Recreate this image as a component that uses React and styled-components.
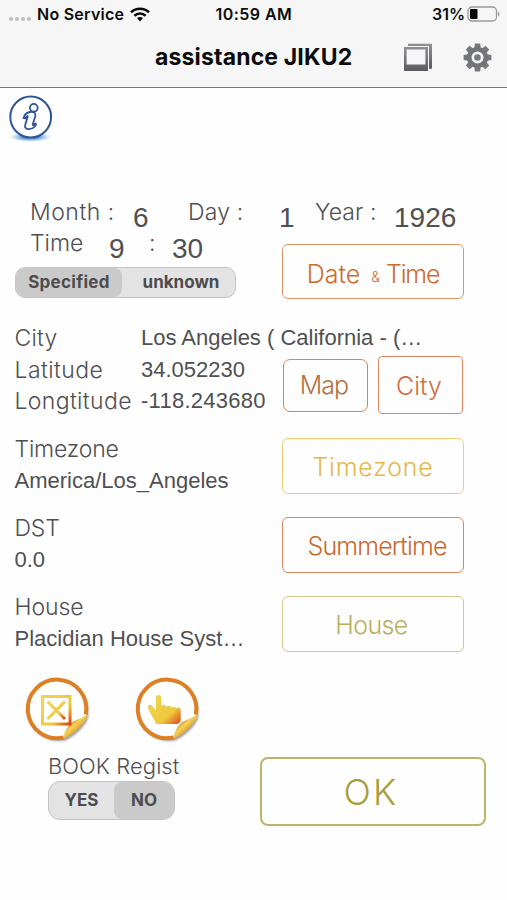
import React, { Component } from 'react';
import styled, { createGlobalStyle } from 'styled-components';

const GlobalStyle = createGlobalStyle`
  body {
    margin: 0;
    background: #fefefe;
    font-family: Inter, "Liberation Sans", sans-serif;
  }
`;

const Screen = styled.div`
  width: 507px;
  height: 900px;
  overflow: hidden;
  color: #505052;
  white-space: nowrap;
`;

/* header */
const Header = styled.header`
  box-sizing: border-box;
  height: 88px;
  background: #f6f6f6;
  border-bottom: 1px solid #77777a;
  color: #0c0c0c;
`;
const StatusBar = styled.div`
  display: grid;
  grid-template-columns: 1fr 78px 1fr;
  height: 28px;
  line-height: 28px;
  padding: 0 7px 0 9px;
  font-size: 16px;
  font-weight: 600;
`;
const StatusSide = styled.div`
  display: flex;
  align-items: center;
  justify-content: ${props => props.$end ? "flex-end" : "flex-start"};
  gap: ${props => props.$gap}px;
  letter-spacing: ${props => props.$end ? "0" : "0.25px"};
`;
const Clock = styled.div`
  letter-spacing: 0.45px;
`;
const Signal = styled.div`
  display: flex;
  gap: 2px;
  padding-top: 10px;

  i {
    width: 4px;
    height: 4px;
    border-radius: 50%;
    background: #bdbdbd;
  }
`;
const TitleBar = styled.div`
  display: grid;
  grid-template-columns: 155px 1fr 29px 29px;
  column-gap: 30px;
  align-items: center;
  height: 59px;
  padding-right: 15px;
`;
const Title = styled.h1`
  grid-column: 2;
  margin: 0 0 0 -30px;
  font-size: 23px;
  line-height: 59px;
  font-weight: 700;
  letter-spacing: 0.15px;
`;

/* form */
const Main = styled.main`
  padding: 6px 0 0;
`;
const InfoButton = styled.div`
  height: 106px;
  padding-left: 8px;
`;
const DateRow = styled.div`
  display: grid;
  grid-template-columns: ${props => props.$columns};
  height: ${props => props.$height}px;
  padding-left: ${props => props.$left}px;
`;
const Label = styled.span`
  font-size: ${props => props.$size || 23}px;
  font-weight: 320;
  line-height: ${props => props.$line || 33}px;
  letter-spacing: ${props => props.$spacing || 0}px;
`;
const BigValue = styled.span`
  font-family: "Liberation Sans", sans-serif;
  font-size: 28px;
  line-height: 35px;
`;
const Value = styled.span`
  font-family: "Liberation Sans", sans-serif;
  font-size: 22px;
  line-height: 32.5px;
  letter-spacing: ${props => props.$spacing || 0}px;
`;
const Split = styled.div`
  display: grid;
  grid-template-columns: 282px auto;
  justify-content: start;
`;
const TimeBox = styled.div`
  height: 91px;
`;
const Field = styled.div`
  display: grid;
  grid-template-columns: 126.5px auto;
  height: 31.5px;
  padding-left: 14.5px;
`;
const ButtonPair = styled.div`
  display: flex;
  align-items: center;
  gap: 10px;
  padding-left: 1px;
`;
const Entry = styled.div`
  display: grid;
  grid-template-rows: 31.5px 31.5px;
  height: 79px;
  padding-left: 14.5px;
`;

const Segmented = styled.div`
  display: grid;
  grid-template-columns: ${props => props.$columns};
  box-sizing: border-box;
  width: ${props => props.$width}px;
  height: ${props => props.$height}px;
  margin-left: ${props => props.$left}px;
  border: 1px solid #c3c3c4;
  border-radius: ${props => props.$radius}px;
  background: #e3e3e4;
  overflow: hidden;
`;
const Segment = styled.div`
  display: flex;
  align-items: center;
  justify-content: center;
  padding: 0 0 2px ${props => props.$inset || 0}px;
  font-size: 17px;
  font-weight: 700;
  letter-spacing: ${props => props.$spacing || 0}px;
  background: ${props => props.$active ? "#cacacb" : "transparent"};
  border-radius: 8px;
  color: #4c4c4e;
`;

const Button = styled.button`
  display: flex;
  align-items: center;
  justify-content: center;
  box-sizing: border-box;
  width: ${props => props.$width || 182}px;
  height: ${props => props.$height || 56}px;
  margin: ${props => props.$top || 0}px 0 0;
  padding: ${props => props.$padding || "0"};
  background: transparent;
  border: ${props => props.$border || 1.5}px solid ${props => props.$line};
  border-radius: ${props => props.$radius || 6}px;
  color: ${props => props.color};
  font-family: inherit;
  font-size: ${props => props.$size || 25}px;
  font-weight: ${props => props.$weight || 290};
  letter-spacing: ${props => props.$spacing || 0}px;

  small {
    margin: 6px 6px 0 11px;
    font-size: 14px;
    font-weight: 300;
  }
`;
const Tight = styled.span`
  letter-spacing: -1.2px;
`;

const Stickers = styled.div`
  display: flex;
  gap: 40px;
  height: 77px;
  padding: 4px 0 0 21.5px;
`;
const Footer = styled.div`
  display: grid;
  grid-template-columns: 260px auto;
  justify-content: start;
`;
const Regist = styled.div`
  display: flex;
  flex-direction: column;

  > span {
    padding-left: 48px;
  }
`;

const Wifi = () => (
  <svg width="20" height="15" viewBox="0 0 20 15" fill="none" stroke="#0c0c0c" strokeWidth="2.6">
    <path d="M1 5.4C6 .6 14 .6 19 5.4" />
    <path d="M4.4 8.800c3.200-3 8-3 11.200 0" />
    <path d="M7 11l3 3.400 3-3.400c-1.700-1.500-4.300-1.500-6 0z" fill="#0c0c0c" stroke="none" />
  </svg>
);

const Battery = () => (
  <svg width="33" height="16" viewBox="0 0 33 16">
    <rect x="1" y="1" width="28.5" height="14" rx="4" fill="none" stroke="#9a9a9a" strokeWidth="1.3" />
    <rect x="3" y="3" width="7.5" height="10" rx="1" fill="#080808" />
    <path d="M31 5.500c1.800.6 1.800 4.400 0 5z" fill="#9a9a9a" />
  </svg>
);

const Pages = () => (
  <svg width="29" height="29" viewBox="0 0 29 29">
    <defs>
      <linearGradient id="steel" x2="0" y2="1">
        <stop stopColor="#909194" />
        <stop offset="1" stopColor="#5b5c60" />
      </linearGradient>
    </defs>
    <path d="M4 .8h24v25h-3V3H4z" fill="url(#steel)" />
    <path d="M0 4h24v24H0zM2.600 6.400v15.200h18.800V6.400z" fill="url(#steel)" fillRule="evenodd" />
  </svg>
);

const teeth = [0, 45, 90, 135, 180, 225, 270, 315];
const Gear = () => (
  <svg width="29" height="29" viewBox="0 0 29 29">
    <g fill="#77787c">
      {teeth.map(angle => (
        <path key={angle} d="M11.300 5l.6-4.400h5.200l.6 4.400z" transform={`rotate(${angle} 14.5 14.5)`} />
      ))}
    </g>
    <circle cx="14.5" cy="14.5" r="8.300" fill="none" stroke="#737478" strokeWidth="4.600" />
    <circle cx="14.5" cy="14.5" r="3.300" fill="#77787c" />
  </svg>
);

const InfoIcon = () => (
  <svg width="46" height="50" viewBox="0 0 46 50">
    <defs>
      <radialGradient id="glow">
        <stop offset=".4" stopColor="#3b7fc0" stopOpacity=".8" />
        <stop offset="1" stopColor="#6fb2e6" stopOpacity="0" />
      </radialGradient>
    </defs>
    <ellipse cx="22.500" cy="43" rx="21" ry="5" fill="url(#glow)" />
    <circle cx="22.700" cy="23" r="20.400" fill="#fff" stroke="#2c559b" strokeWidth="2" />
    <g fill="#fff" stroke="#2c559b" strokeWidth="1.800" strokeLinejoin="round">
      <path d="M15.500 24.200c.8-3.300 3.500-5.700 6.500-6.200 4-.6 6 .8 5.300 4.200l-2.500 8c-.3 1.500.8 1.200 2.500-.7 1.300 0 .8 1.400-.5 3-2 2.300-4 2.800-6.300 2.700-3-.2-4-2-3.200-4.800l2.400-7.700c.1-1.400-1-.4-2.400 1.700z" />
      <circle cx="25.800" cy="13.800" r="3.900" />
    </g>
  </svg>
);

class Sticker extends Component {
  render() {
    const { id, children } = this.props;
    return (
      <svg width="70" height="72" viewBox="0 0 70 72">
        <defs>
          <linearGradient id={`${id}-ink`} x1=".15" y1=".2" x2="1" y2="1">
            <stop stopColor="#eed34b" />
            <stop offset=".6" stopColor="#efc83c" />
            <stop offset="1" stopColor="#d9431c" />
          </linearGradient>
          <linearGradient id={`${id}-fold`} gradientUnits="userSpaceOnUse" x1="47" y1="46" x2="57" y2="57">
            <stop stopColor="#b67a18" />
            <stop offset=".5" stopColor="#f6d255" />
            <stop offset="1" stopColor="#dd951f" />
          </linearGradient>
          <filter id={`${id}-shade`} x="-20%" y="-20%" width="140%" height="150%">
            <feDropShadow dx="1" dy="2" stdDeviation="1.300" floodColor="#444" floodOpacity=".55" />
          </filter>
        </defs>
        <g filter={`url(#${id}-shade)`}>
          <path d="M41.500 64.200A30 30 0 1 1 64.500 41.500C58 49 50 57 41.500 64.200z" fill="#fff" />
          <path d="M40.500 65C43 57 45.500 52.500 49 49c4.500-3.500 11-4 16.500-9.500C65 47 53.500 60 40.500 65z" fill={`url(#${id}-fold)`} />
        </g>
        <path d="M41.500 63.500A29.300 29.300 0 1 1 63.800 40.500" fill="none" stroke="#dc7f25" strokeWidth="4" />
        {children}
      </svg>
    );
  }
}

class App extends Component {
  render() {
    return (
      <Screen>
        <GlobalStyle />
        <Header>
          <StatusBar>
            <StatusSide $gap={6}>
              <Signal><i /><i /><i /><i /></Signal>
              No Service
              <Wifi />
            </StatusSide>
            <Clock>10:59 AM</Clock>
            <StatusSide $end $gap={2}>
              31%
              <Battery />
            </StatusSide>
          </StatusBar>
          <TitleBar>
            <Title>assistance JIKU2</Title>
            <Pages />
            <Gear />
          </TitleBar>
        </Header>
        <Main>
          <InfoButton><InfoIcon /></InfoButton>

          <DateRow $columns="103px 55px 91px 36px 79px auto" $height={31} $left={30}>
            <Label $line={25} $spacing={0.5}>Month :</Label>
            <BigValue>6</BigValue>
            <Label $line={25} $spacing={0.2}>Day :</Label>
            <BigValue>1</BigValue>
            <Label $line={25} $spacing={0.1}>Year :</Label>
            <BigValue>1926</BigValue>
          </DateRow>
          <Split>
            <TimeBox>
              <DateRow $columns="79px 40px 23px auto" $height={36} $left={30}>
                <Label $line={25}>Time</Label>
                <BigValue>9</BigValue>
                <Label $line={25}>:</Label>
                <BigValue>30</BigValue>
              </DateRow>
              <Segmented $columns="106px 1fr" $width={221} $height={31} $left={15} $radius={10}>
                <Segment $active $spacing={0.3}>Specified</Segment>
                <Segment $inset={5}>unknown</Segment>
              </Segmented>
            </TimeBox>
            <Button color="#cb6c2a" $line="#e0935f" $height={55} $top={13} $padding="4px 0 0">
              Date<small>&amp;</small><Tight>Time</Tight>
            </Button>
          </Split>

          <Field>
            <Label $spacing={0.2}>City</Label>
            <Value>Los Angeles ( California - (…</Value>
          </Field>
          <Split>
            <div>
              <Field>
                <Label $spacing={0.4}>Latitude</Label>
                <Value>34.052230</Value>
              </Field>
              <Field>
                <Label $spacing={0.35}>Longtitude</Label>
                <Value $spacing={0.25}>-118.243680</Value>
              </Field>
            </div>
            <ButtonPair>
              <Button color="#b5713f" $line="#c98a62" $width={85} $height={53} $spacing={-1} $radius={7} $padding="0 3px 0 0">Map</Button>
              <Button color="#d0703f" $line="#dc8862" $width={85} $height={58} $radius={4} $padding="2px 3px 0 0">City</Button>
            </ButtonPair>
          </Split>

          <DateRow $height={16.5} />

          <Split>
            <Entry>
              <Label $spacing={-0.2}>Timezone</Label>
              <Value>America/Los_Angeles</Value>
            </Entry>
            <Button color="#e5b749" $line="#f0cd70" $top={5} $spacing={0.8} $padding="2px 0 0">Timezone</Button>
            <Entry>
              <Label $spacing={-0.2}>DST</Label>
              <Value>0.0</Value>
            </Entry>
            <Button color="#c9682f" $line="#d98660" $top={5} $spacing={-0.85} $padding="1px 0 0 8px">Summertime</Button>
            <Entry>
              <Label $spacing={-0.1}>House</Label>
              <Value>Placidian House Syst…</Value>
            </Entry>
            <Button color="#b9ad5c" $line="#d0c88a" $top={5} $spacing={-0.6} $padding="1px 3px 0 0">House</Button>
          </Split>

          <Stickers>
            <Sticker id="cross">
              <g fill="none" stroke="url(#cross-ink)">
                <path d="M20.500 22.500h27.500v27.500h-27.500z" strokeWidth="3" />
                <path d="M25.500 27.500l17.500 17.500M43 27.500l-17.500 17.500" strokeWidth="3" />
              </g>
            </Sticker>
            <Sticker id="hand">
              <path
                d="M24 50c-1-4-4-7-5.500-10.500-1-2.500-2.500-4.500-2.700-7 .5-2.200 3-2.400 4.400-.6l3.600 4.200V23c.4-2.800 5.200-2.800 5.600 0v9.500c1-2.100 4.500-1.800 5 .5 1-2 4.700-1.700 5.200.7 1-1.600 4-1.200 4.500.9 1.500-1.800 4.300-1 4.600 1.400v9.500c-.2 3-1.500 4-4 4.500z"
                fill="url(#hand-ink)"
              />
            </Sticker>
          </Stickers>

          <Footer>
            <Regist>
              <Label $size={22} $line={30} $spacing={0.05}>BOOK Regist</Label>
              <Segmented $columns="65px 1fr" $width={127} $height={39} $left={48} $radius={12}>
                <Segment $inset={-0}>YES</Segment>
                <Segment $active>NO</Segment>
              </Segmented>
            </Regist>
            <Button color="#a99f3d" $line="#bdb467" $border={2} $width={226} $height={69} $top={6} $size={36} $weight={260} $spacing={2.3} $radius={8} $padding="1px 4px 0 0">OK</Button>
          </Footer>
        </Main>
      </Screen>
    );
  }
}

export default App;
